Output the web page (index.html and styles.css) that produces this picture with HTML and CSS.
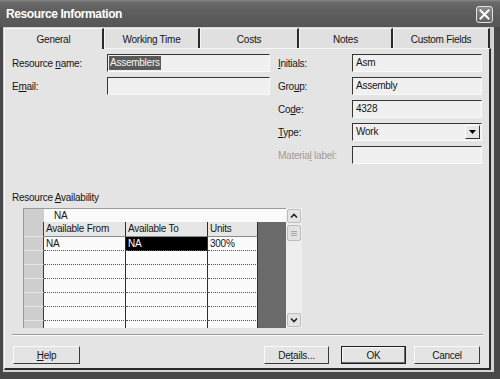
FILE: index.html
```html
<!DOCTYPE html>
<html>
<head>
<meta charset="utf-8">
<title>Resource Information</title>
<link rel="stylesheet" href="styles.css">
</head>
<body>
<div class="window">
  <div class="titlebar">
    <span class="title">Resource Information</span>
    <span class="close"><svg width="11" height="11" viewBox="0 0 11 11"><path d="M1.5 1.5 L9.5 9.5 M9.5 1.5 L1.5 9.5" stroke="#fff" stroke-width="2" fill="none" stroke-linecap="square"/></svg></span>
  </div>
  <div class="client">
    <div class="tabs">
      <div class="tab active w1">General</div>
      <div class="tab w2">Working Time</div>
      <div class="tab w3">Costs</div>
      <div class="tab w4">Notes</div>
      <div class="tab w5">Custom Fields</div>
    </div>
    <div class="panel">
      <div class="form">
        <div class="fcol left">
          <label>Resource <u>n</u>ame:</label>
          <div class="input first"><span class="sel">Assemblers</span></div>
          <label>E<u>m</u>ail:</label>
          <div class="input"></div>
        </div>
        <div class="fcol right">
          <label><u>I</u>nitials:</label>
          <div class="input">Asm</div>
          <label>Gro<u>u</u>p:</label>
          <div class="input">Assembly</div>
          <label>Co<u>d</u>e:</label>
          <div class="input">4328</div>
          <label><u>T</u>ype:</label>
          <div class="input select"><span>Work</span><span class="ddbtn"><svg width="7" height="4" viewBox="0 0 7 4"><polygon points="0,0 7,0 3.5,4" fill="#000"/></svg></span></div>
          <label class="disabled">Materia<u>l</u> label:</label>
          <div class="input"></div>
        </div>
      </div>
      <div class="avail-label">Resource <u>A</u>vailability</div>
      <div class="gridbox">
        <div class="sheet">
          <div class="editbar"><div class="rh"></div><div class="edit">NA</div></div>
          <div class="cells">
            <div class="dark"></div>
            <div class="rh"></div><div class="hd">Available From</div><div class="hd">Available To</div><div class="hd">Units</div>
            <div class="rh"></div><div class="cd">NA</div><div class="cd selected">NA</div><div class="cd">300%</div>
            <div class="rh"></div><div class="cd"></div><div class="cd"></div><div class="cd"></div>
            <div class="rh"></div><div class="cd"></div><div class="cd"></div><div class="cd"></div>
            <div class="rh"></div><div class="cd"></div><div class="cd"></div><div class="cd"></div>
            <div class="rh"></div><div class="cd"></div><div class="cd"></div><div class="cd"></div>
            <div class="rh"></div><div class="cd"></div><div class="cd"></div><div class="cd"></div>
            <div class="rh"></div><div class="cd"></div><div class="cd"></div><div class="cd"></div>
          </div>
        </div>
        <div class="vscroll">
          <div class="sbtn"><svg width="12" height="12" viewBox="0 0 12 12"><polyline points="3,7.5 6,4.5 9,7.5" stroke="#222" stroke-width="1.6" fill="none"/></svg></div>
          <div class="thumb"><span></span><span></span><span></span></div>
          <div class="track"></div>
          <div class="sbtn"><svg width="12" height="12" viewBox="0 0 12 12"><polyline points="3,4.5 6,7.5 9,4.5" stroke="#222" stroke-width="1.6" fill="none"/></svg></div>
        </div>
      </div>
      <div class="sep"></div>
      <div class="buttons">
        <div class="btn help"><span><u>H</u>elp</span></div>
        <div class="btn details"><span>De<u>t</u>ails...</span></div>
        <div class="btn ok"><span>OK</span></div>
        <div class="btn cancel"><span>Cancel</span></div>
      </div>
    </div>
  </div>
</div>
</body>
</html>
```
FILE: styles.css
```css
* { box-sizing: border-box; }
html, body { margin: 0; padding: 0; }
body {
  width: 500px;
  height: 379px;
  overflow: hidden;
  background: #4a4a4a;
  font-family: "Liberation Sans", Arial, sans-serif;
  font-size: 10px;
  letter-spacing: -0.25px;
  color: #151515;
}
u { text-decoration: underline; text-underline-offset: 1px; }

.window {
  width: 500px;
  height: 379px;
  display: flex;
  flex-direction: column;
  background: #484848;
}

.titlebar {
  height: 27px;
  flex: none;
  display: flex;
  align-items: center;
  justify-content: space-between;
  padding: 1px 7px 0 6px;
  background: linear-gradient(#8a8a8a 0, #6a6a6a 2px, #5e5e5e 40%, #565656 100%);
}
.title {
  color: #fff;
  font-weight: bold;
  font-size: 12px;
  letter-spacing: -0.4px;
}
.close {
  width: 17px;
  height: 17px;
  border: 1px solid #e2e2e2;
  border-radius: 3px;
  background: linear-gradient(#8c8c8c, #636363);
  display: flex;
  align-items: center;
  justify-content: center;
}

.client {
  flex: none;
  height: 345px;
  margin: 0 6px 0 3px;
  background: #d3d3d3;
  display: flex;
  flex-direction: column;
}

.tabs {
  height: 21px;
  flex: none;
  display: flex;
  align-items: flex-end;
  padding-left: 1px;
}
.tab {
  height: 20px;
  border-top: 1px solid #f4f4f4;
  border-left: 1px solid #f4f4f4;
  border-right: 2px solid #2a2a2a;
  background: #e0e0e0;
  display: flex;
  align-items: center;
  justify-content: center;
  padding-top: 1px;
}
.tab.active {
  height: 21px;
  margin-bottom: -1px;
  background: #e4e4e4;
  position: relative;
  z-index: 1;
}
.w1 { width: 100px; }
.w2 { width: 96px; }
.w3 { width: 99px; }
.w4 { width: 94px; }
.w5 { width: 97px; }

.panel {
  height: 322px;
  width: 487px;
  margin-left: 1px;
  flex: none;
  background: #e4e4e4;
  border-top: 1px solid #f6f6f6;
  border-left: 1px solid #f6f6f6;
  border-right: 2px solid #2a2a2a;
  border-bottom: 2px solid #2a2a2a;
  padding: 5px 6px 4px 7px;
  display: flex;
  flex-direction: column;
}

.form { display: flex; gap: 8px; }
.fcol {
  display: grid;
  row-gap: 5px;
  grid-auto-rows: 18px;
  align-content: start;
}
.fcol.left { grid-template-columns: 95px 163px; }
.fcol.right { grid-template-columns: 74px 130px; }
.fcol label { align-self: center; white-space: nowrap; }
.fcol label.disabled { color: #9c9c9c; }

.input {
  border-top: 1px solid #353535;
  border-left: 1px solid #353535;
  border-right: 1px solid #fafafa;
  border-bottom: 1px solid #fafafa;
  background: #f0f0f0;
  padding: 0 2px 0 3px;
  line-height: 16px;
  white-space: nowrap;
}
.input.first { padding-left: 1px; padding-top: 1px; line-height: 14px; }
.sel {
  display: inline-block;
  background: #5a5a5a;
  color: #f6f6f6;
  padding: 0 1px;
  line-height: 14px;
}
.input.select {
  display: flex;
  justify-content: space-between;
  padding-right: 1px;
}
.ddbtn {
  width: 15px;
  height: 14px;
  margin-top: 1px;
  background: #e6e6e6;
  border-top: 1px solid #fff;
  border-left: 1px solid #fff;
  border-right: 1px solid #333;
  border-bottom: 1px solid #333;
  display: flex;
  align-items: center;
  justify-content: center;
}

.avail-label {
  margin-top: 27px;
  line-height: 13px;
}

.gridbox {
  margin: 4px 0 0 11px;
  width: 279px;
  height: 120px;
  display: flex;
}
.sheet {
  width: 263px;
  border-top: 1px solid #9a9a9a;
  border-left: 1px solid #9a9a9a;
  display: flex;
  flex-direction: column;
  background: #fafafa;
}
.editbar { height: 13px; display: flex; }
.editbar .rh { width: 20px; background: #cecece; border-right: 1px solid #cecece; }
.editbar .edit { flex: 1; padding-left: 10px; line-height: 13px; background: #fafafa; }

.cells {
  display: grid;
  grid-template-columns: 20px 82px 82px 50px 28px;
  grid-template-rows: 15px repeat(7, 14px);
  height: 106px;
  overflow: hidden;
}
.cells .rh {
  background: #cecece;
  border-right: 1px solid #3a3a3a;
  border-bottom: 1px solid #e6e6e6;
}
.hd {
  background: #e6e6e6;
  border-right: 1px solid #2e2e2e;
  border-bottom: 1px solid #8a8a8a;
  padding-left: 2px;
  line-height: 14px;
  white-space: nowrap;
}
.cd {
  background: #fbfbfb;
  border-right: 1px solid #2e2e2e;
  border-bottom: 1px dotted #555;
  padding-left: 2px;
  line-height: 13px;
}
.cd.selected { background: #000; color: #fff; }
.dark { grid-column: 5; grid-row: 1 / span 8; background: #6b6b6b; }

.vscroll {
  width: 16px;
  display: flex;
  flex-direction: column;
  background: #eeeeee;
  padding: 1px 1px 1px 1px;
}
.sbtn {
  height: 14px;
  flex: none;
  background: #e4e4e4;
  border: 1px solid #bdbdbd;
  border-radius: 2px;
  display: flex;
  align-items: center;
  justify-content: center;
}
.thumb {
  margin-top: 2px;
  height: 16px;
  flex: none;
  background: #e2e2e2;
  border: 1px solid #bdbdbd;
  border-radius: 2px;
  display: flex;
  flex-direction: column;
  align-items: center;
  justify-content: center;
  gap: 1px;
}
.thumb span { width: 6px; height: 1px; background: #a8a8a8; }
.track { flex: 1; }

.sep {
  margin-top: 6px;
  height: 2px;
  flex: none;
  border-top: 1px solid #9a9a9a;
  border-bottom: 1px solid #fbfbfb;
}

.buttons {
  margin-top: 10px;
  display: flex;
  height: 18px;
  flex: none;
}
.btn {
  height: 18px;
  width: 65px;
  background: #e4e4e4;
  border: 1px solid;
  border-color: #fafafa #3a3a3a #3a3a3a #fafafa;
  display: flex;
  align-items: center;
  justify-content: center;
}
.btn.help { width: 67px; margin-left: 1px; }
.btn.details { margin-left: auto; }
.btn.ok {
  margin-left: 12px;
  border: 1px solid #1e1e1e;
  box-shadow: inset -1px -1px #6a6a6a, inset 1px 1px #fafafa;
}
.btn.cancel { margin-left: 8px; width: 66px; margin-right: 3px; }
```
